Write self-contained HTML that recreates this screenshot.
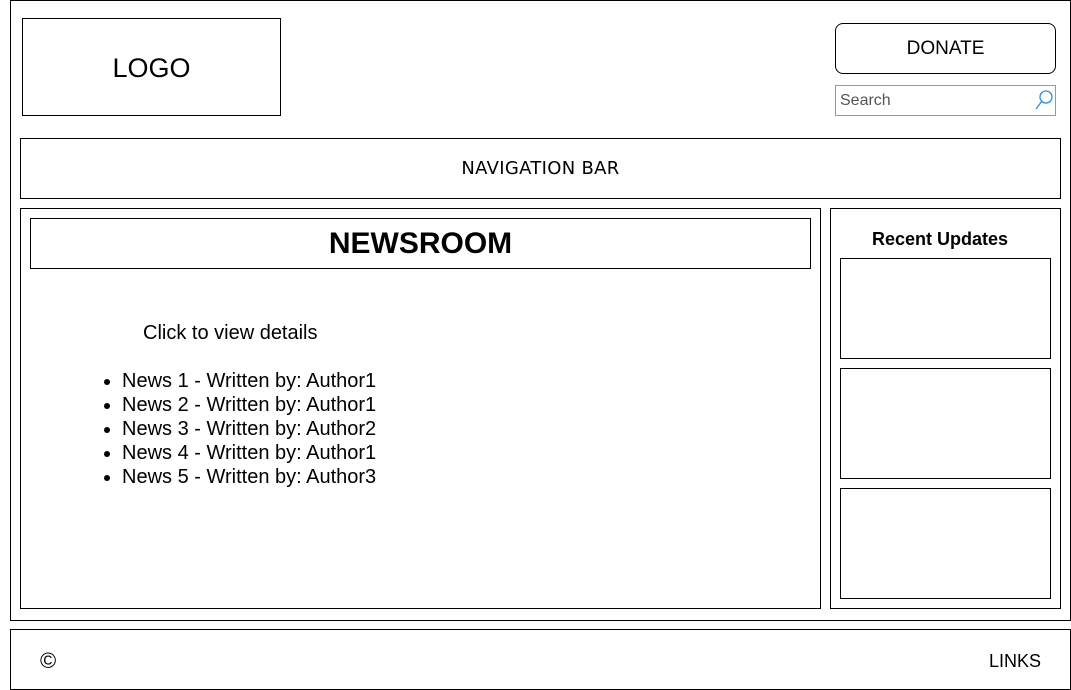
<!DOCTYPE html><html><head><style>
body{margin:0;width:1071px;height:690px;background:#fff;position:relative;font-family:"Liberation Sans",sans-serif;color:#000;overflow:hidden}
.b{position:absolute;border:1px solid #000;box-sizing:border-box}
.t{position:absolute;white-space:nowrap}
</style></head><body>
<div class="b" style="left:10px;top:0;width:1061px;height:621px"></div>
<div class="b" style="left:22px;top:18px;width:259px;height:98px"></div>
<div class="t" style="left:22px;top:53px;width:259px;text-align:center;font-size:27px">LOGO</div>
<div class="b" style="left:835px;top:23px;width:221px;height:51px;border-radius:8px"></div>
<div class="t" style="left:835px;top:38px;width:221px;text-align:center;font-size:19px">DONATE</div>
<div class="b" style="left:835px;top:85px;width:221px;height:31px;border-color:#999"></div>
<div class="t" style="left:840px;top:92px;font-size:16px;color:#555">Search</div>
<svg style="position:absolute;left:1034px;top:89px" width="20" height="22"><circle cx="12" cy="8" r="6" fill="none" stroke="#2a8fd8" stroke-width="1.3"/><path d="M8 12 L2 20" stroke="#2a8fd8" stroke-width="1.3"/></svg>
<div class="b" style="left:20px;top:138px;width:1041px;height:61px"></div>
<div class="t" style="left:20px;top:158px;width:1041px;text-align:center;font-size:18px;font-family:'DejaVu Sans',sans-serif;letter-spacing:0.3px">NAVIGATION BAR</div>
<div class="b" style="left:20px;top:208px;width:801px;height:401px"></div>
<div class="b" style="left:30px;top:218px;width:781px;height:51px"></div>
<div class="t" style="left:30px;top:227px;width:781px;text-align:center;font-size:30px;font-weight:bold">NEWSROOM</div>
<div class="t" style="left:143px;top:322px;font-size:20px">Click to view details</div>
<ul style="position:absolute;left:82px;top:369px;margin:0;padding-left:40px;font-size:20px;line-height:24px">
<li>News 1 - Written by: Author1</li><li>News 2 - Written by: Author1</li><li>News 3 - Written by: Author2</li><li>News 4 - Written by: Author1</li><li>News 5 - Written by: Author3</li></ul>
<div class="b" style="left:830px;top:208px;width:231px;height:401px"></div>
<div class="t" style="left:830px;top:229px;width:220px;text-align:center;font-size:18px;font-weight:bold">Recent Updates</div>
<div class="b" style="left:840px;top:258px;width:211px;height:101px"></div>
<div class="b" style="left:840px;top:368px;width:211px;height:111px"></div>
<div class="b" style="left:840px;top:488px;width:211px;height:111px"></div>
<div class="b" style="left:10px;top:629px;width:1061px;height:61px"></div>
<div class="t" style="left:40px;top:648px;font-size:22px">©</div>
<div class="t" style="left:989px;top:651px;font-size:18px">LINKS</div>
</body></html>
